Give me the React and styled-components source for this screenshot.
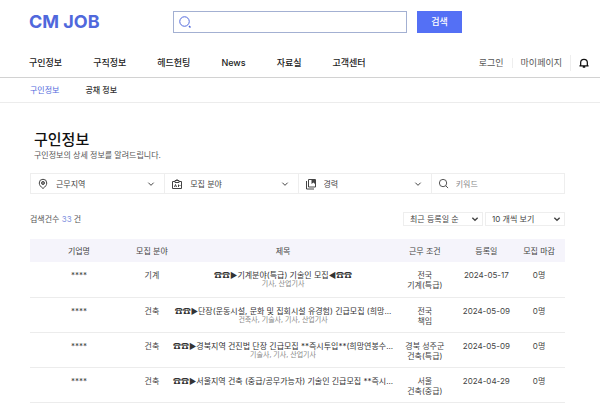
import { useState } from "react";
import styled, { createGlobalStyle } from "styled-components";

const MENUS = ["구인정보", "구직정보", "헤드헌팅", "News", "자료실", "고객센터"];

const JOBS = [
  {
    field: "기계",
    title: "☎☎▶기계분야(특급) 기술인 모집◀☎☎",
    license: "기사, 산업기사",
    area: "전국",
    grade: "기계(특급)",
    date: "2024-05-17",
  },
  {
    field: "건축",
    title: "☎☎▶단장(운동시설, 문화 및 집회시설 유경험) 긴급모집 (희망...",
    license: "건축사, 기술사, 기사, 산업기사",
    area: "전국",
    grade: "책임",
    date: "2024-05-09",
  },
  {
    field: "건축",
    title: "☎☎▶경북지역 건진법 단장 긴급모집 **즉시투입**(희망연봉수...",
    license: "기술사, 기사, 산업기사",
    area: "경북 성주군",
    grade: "건축(특급)",
    date: "2024-05-09",
  },
  {
    field: "건축",
    title: "☎☎▶서울지역 건축 (중급/공무가능자) 기술인 긴급모집 **즉시...",
    license: "",
    area: "서울",
    grade: "건축(중급)",
    date: "2024-04-29",
  },
];

const GlobalStyle = createGlobalStyle`
  * {
    box-sizing: border-box;
  }
  body {
    margin: 0;
    background: #fff;
    color: #444;
    font-family: Inter, "Noto Sans CJK KR", sans-serif;
    font-size: 8px;
    line-height: 10px;
    overflow: hidden;
  }
  button, input, select {
    margin: 0;
    font: inherit;
    color: inherit;
  }
  a {
    color: inherit;
    text-decoration: none;
  }
`;

const Top = styled.div`
  display: flex;
  align-items: center;
  padding: 11px 29px 0;
`;

const Logo = styled.a`
  width: 144px;
  color: #5068dc;
  font-size: 18px;
  line-height: 22px;
  font-weight: 700;
`;

const SearchForm = styled.form`
  display: flex;
  flex: 1;
  gap: 10px;
  margin-right: 109px;
`;

const SearchBox = styled.label`
  display: flex;
  flex: 1;
  align-items: center;
  height: 22px;
  padding: 0 5px;
  border: 1px solid #a3b0d2;
`;

const TextInput = styled.input`
  flex: 1;
  min-width: 0;
  padding: 0;
  border: 0;
  outline: 0;
  background: transparent;

  &::placeholder {
    color: #888;
    opacity: 1;
  }
`;

const SearchBtn = styled.button`
  width: 45px;
  height: 22px;
  padding: 0;
  border: 0;
  background: #5470f5;
  color: #fff;
  font-size: 9px;
  font-weight: 500;
`;

const Nav = styled.nav`
  display: flex;
  align-items: center;
  justify-content: space-between;
  height: 45px;
  padding: 16px 11px 0 29px;
  border-bottom: 1px solid #d2d2d2;
  font-size: 9px;
`;

const Menu = styled.div`
  display: flex;
  gap: 31px;
  color: #222;
  font-weight: 500;
`;

const UserMenu = styled.div`
  display: flex;
  align-items: center;
  color: #555;

  && > * + * {
    margin-left: 8px;
    padding-left: 8px;
    border-left: 1px solid #eee;
  }
`;

const BellBtn = styled.button`
  display: flex;
  align-items: center;
  height: 16px;
  padding: 0;
  border: 0;
  background: none;
`;

const SubNav = styled.nav`
  display: flex;
  align-items: center;
  gap: 26px;
  height: 25px;
  padding: 0 30px;
  border-bottom: 1px solid #ececec;
`;

const SubLink = styled.a`
  color: ${(props) => (props.$active ? "#5068dc" : "#333")};
  font-weight: ${(props) => (props.$active ? 400 : 500)};
`;

const Main = styled.main`
  padding: 28px 35px 0 30px;
`;

const Title = styled.h1`
  margin: 0;
  padding-left: 4px;
  color: #111;
  font-size: 15px;
  line-height: 18px;
  font-weight: 500;
`;

const Description = styled.p`
  margin: 0;
  padding: 1px 4px 0;
  color: #555;
`;

const Filters = styled.div`
  display: grid;
  grid-template-columns: repeat(4, 1fr);
  height: 21px;
  margin-top: 13px;
  border: 1px solid #eee;
`;

const FilterItem = styled.label`
  display: flex;
  align-items: center;
  gap: 7px;
  min-width: 0;
  padding: 0 9px 0 6px;

  & + & {
    border-left: 1px solid #eee;
  }
`;

const FilterSelect = styled.select`
  flex: 1;
  min-width: 0;
  padding: 0;
  border: 0;
  background: none;
  appearance: none;
`;

const ListBar = styled.div`
  display: flex;
  align-items: center;
  justify-content: space-between;
  margin-top: 18px;
`;

const Count = styled.span`
  color: #555;

  b {
    color: #7f8fe0;
    font-weight: 400;
  }
`;

const Sorts = styled.div`
  display: flex;
  gap: 2px;
`;

const SortBox = styled.label`
  display: flex;
  align-items: center;
  width: 80px;
  height: 14px;
  padding: 0 3px 0 6px;
  border: 1px solid #eee;
`;

const Table = styled.table`
  width: 100%;
  margin-top: 13px;
  border-collapse: collapse;
  table-layout: fixed;
  text-align: center;
`;

const Th = styled.th`
  width: ${(props) => props.$width};
  height: 23px;
  padding: 0;
  background: #f5f4fb;
  font-weight: 400;
`;

const Td = styled.td`
  height: 35px;
  padding: 8px 0 0;
  border-bottom: 1px solid #ececec;
  vertical-align: top;
  white-space: nowrap;
`;

const JobLink = styled.a`
  display: flex;
  justify-content: center;
  color: #333;
`;

const License = styled.span`
  display: block;
  color: #888;
  font-size: 7px;
  line-height: 8px;
`;

const Svg = ({ size, children, stroke = 2 }) => (
  <svg
    width={size}
    height={size}
    viewBox="0 0 24 24"
    fill="none"
    stroke="currentColor"
    strokeWidth={stroke}
    aria-hidden="true"
  >
    {children}
  </svg>
);

const Chevron = ({ stroke }) => (
  <Svg size={8} stroke={stroke}>
    <path d="M4 8l8 8 8-8" />
  </Svg>
);

const PinIcon = () => (
  <Svg size={12}>
    <path d="M12 21C7 17 4.500 14 4.500 10a7.500 7.500 0 0 1 15 0c0 4-2.500 7-7.500 11z" />
    <circle cx="12" cy="10" r="3" />
    <circle cx="12" cy="10" r="1" />
  </Svg>
);

const BadgeIcon = () => (
  <Svg size={12}>
    <path d="M8 7H3v14h18V7h-5M8 9V5h8v4z" />
    <path d="M12 2v3" />
    <path d="M7 18l2-5 2 5M15 13v5M17 15h2" strokeWidth="2" />
  </Svg>
);

const BookIcon = () => (
  <Svg size={12}>
    <path d="M7 3h14v15H7z" />
    <path d="M3 6v16h15" />
    <path d="M13 3h7v9l-3-3-4 3z" fill="currentColor" stroke="none" />
  </Svg>
);

const FilterField = ({ icon, label }) => (
  <FilterItem>
    {icon}
    <FilterSelect aria-label={label}>
      <option>{label}</option>
    </FilterSelect>
    <Chevron stroke={3} />
  </FilterItem>
);

const SortField = ({ label, options }) => (
  <SortBox>
    <FilterSelect aria-label={label}>
      {options.map((option) => (
        <option key={option}>{option}</option>
      ))}
    </FilterSelect>
    <Chevron stroke={4} />
  </SortBox>
);

const Header = () => {
  const [query, setQuery] = useState("");

  return (
    <header>
      <Top>
        <Logo href="#">CM JOB</Logo>
        <SearchForm onSubmit={(e) => e.preventDefault()}>
          <SearchBox>
            <svg width="12" height="12" viewBox="0 0 24 24" fill="none" stroke="#5068dc" strokeWidth="2" aria-hidden="true">
              <circle cx="11" cy="11" r="9.500" />
              <path d="M20 20l3 3" strokeWidth="3" />
            </svg>
            <TextInput
              aria-label="검색어"
              value={query}
              onChange={(e) => setQuery(e.target.value)}
            />
          </SearchBox>
          <SearchBtn type="submit">검색</SearchBtn>
        </SearchForm>
      </Top>
      <Nav>
        <Menu>
          {MENUS.map((menu) => (
            <a href="#" key={menu}>
              {menu}
            </a>
          ))}
        </Menu>
        <UserMenu>
          <a href="#">로그인</a>
          <a href="#">마이페이지</a>
          <BellBtn type="button" aria-label="알림">
            <svg width="10" height="10" viewBox="0 0 24 24" fill="none" stroke="#111" strokeWidth="3" aria-hidden="true">
              <path d="M1 19h22M4 19v-8a8 8 0 0 1 16 0v8M9 22h6" />
            </svg>
          </BellBtn>
        </UserMenu>
      </Nav>
      <SubNav>
        <SubLink href="#" $active>
          구인정보
        </SubLink>
        <SubLink href="#">공채 정보</SubLink>
      </SubNav>
    </header>
  );
};

const JobTable = () => (
  <Table>
    <thead>
      <tr>
        <Th $width="18.3%">기업명</Th>
        <Th $width="9%">모집 분야</Th>
        <Th $width="40%">제목</Th>
        <Th $width="13%">근무 조건</Th>
        <Th $width="10%">등록일</Th>
        <Th>모집 마감</Th>
      </tr>
    </thead>
    <tbody>
      {JOBS.map((job) => (
        <tr key={job.title}>
          <Td>****</Td>
          <Td>{job.field}</Td>
          <Td>
            <JobLink href="#">{job.title}</JobLink>
            <License>{job.license}</License>
          </Td>
          <Td>
            {job.area}
            <br />
            {job.grade}
          </Td>
          <Td>{job.date}</Td>
          <Td>0명</Td>
        </tr>
      ))}
    </tbody>
  </Table>
);

const App = () => {
  return (
    <>
      <GlobalStyle />
      <Header />
      <Main>
        <Title>구인정보</Title>
        <Description>구인정보의 상세 정보를 알려드립니다.</Description>
        <Filters>
          <FilterField icon={<PinIcon />} label="근무지역" />
          <FilterField icon={<BadgeIcon />} label="모집 분야" />
          <FilterField icon={<BookIcon />} label="경력" />
          <FilterItem>
            <Svg size={11} stroke={2}>
              <circle cx="11" cy="11" r="8" />
              <path d="M17 17l5 5" />
            </Svg>
            <TextInput aria-label="키워드" placeholder="키워드" />
          </FilterItem>
        </Filters>
        <ListBar>
          <Count>
            검색건수 <b>33</b> 건
          </Count>
          <Sorts>
            <SortField label="정렬" options={["최근 등록일 순"]} />
            <SortField label="보기 개수" options={["10 개씩 보기"]} />
          </Sorts>
        </ListBar>
        <JobTable />
      </Main>
    </>
  );
};

export default App;
